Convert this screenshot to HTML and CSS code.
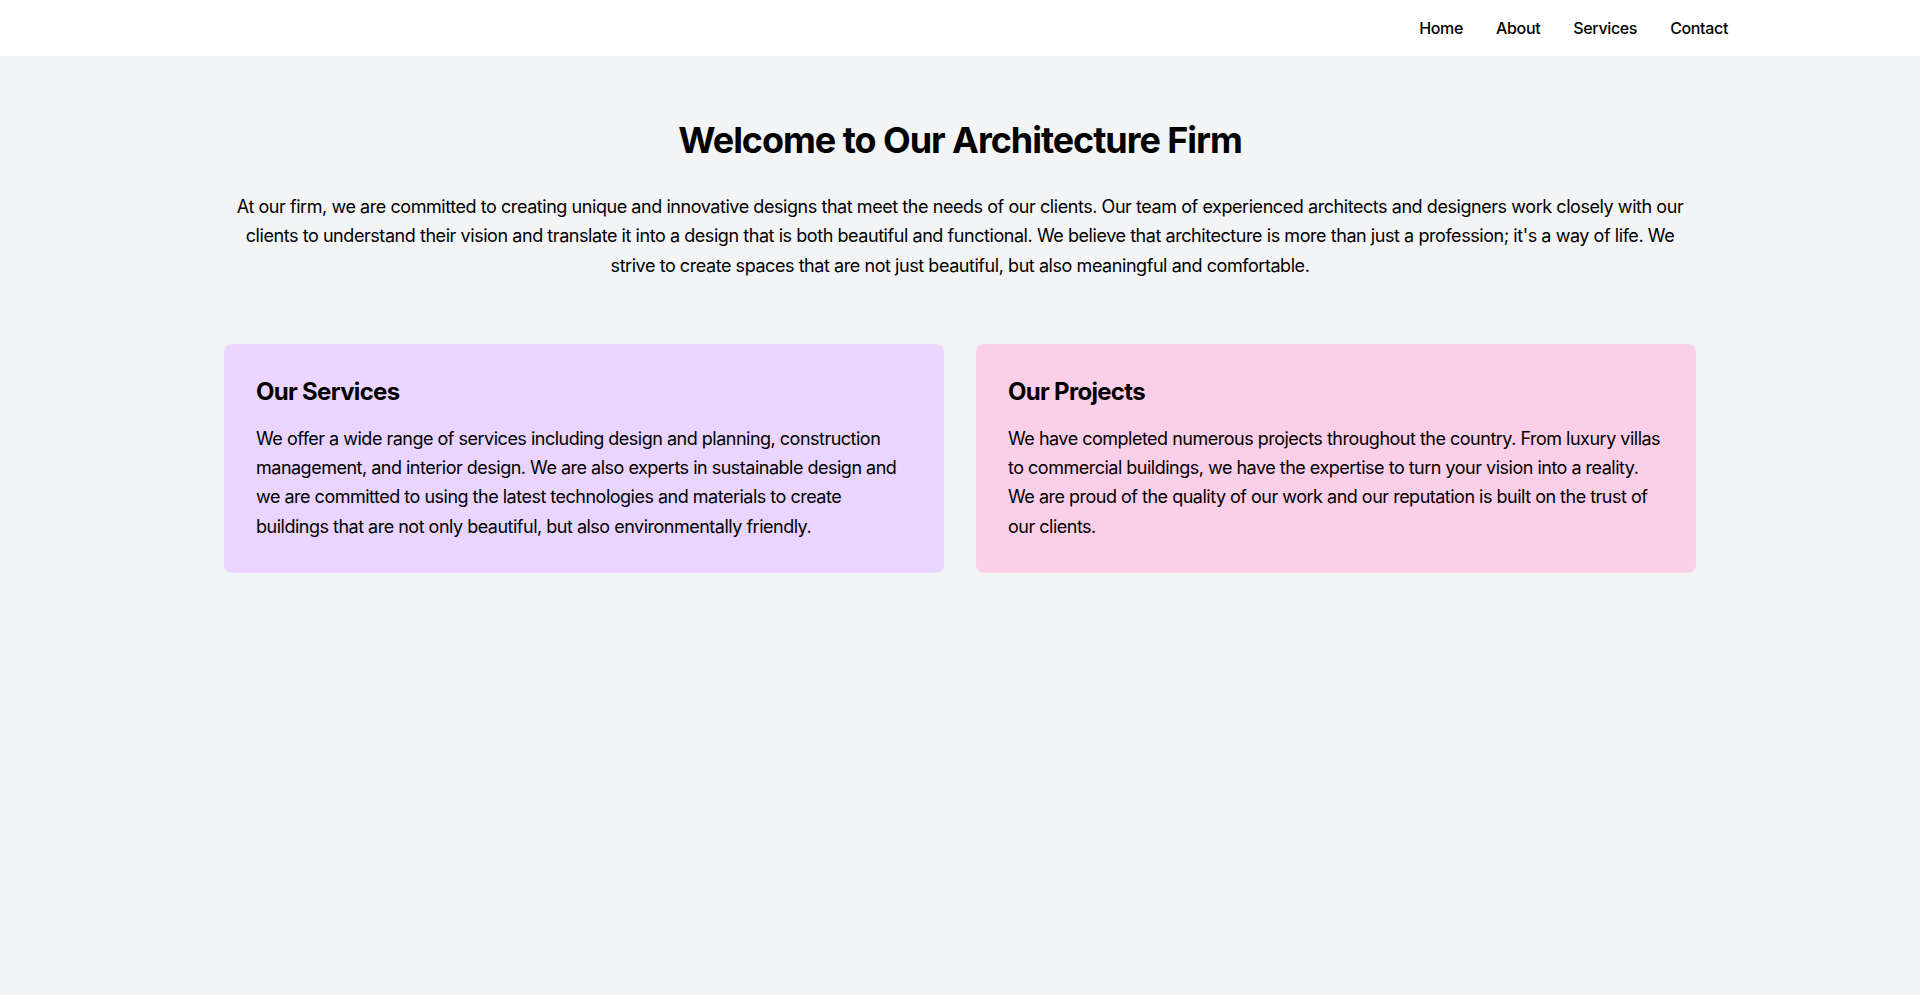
FILE: index.html
```html
<!DOCTYPE html>
<html lang="en">
<head>
<meta charset="utf-8">
<title>Architecture Firm</title>
<link rel="stylesheet" href="styles.css">
</head>
<body>
<header class="topbar">
  <nav class="nav">
    <a href="#" class="nav-link">Home</a>
    <a href="#" class="nav-link">About</a>
    <a href="#" class="nav-link">Services</a>
    <a href="#" class="nav-link">Contact</a>
  </nav>
</header>
<main class="main">
  <h1 class="title">Welcome to Our Architecture Firm</h1>
  <p class="intro">At our firm, we are committed to creating unique and innovative designs that meet the needs of our clients. Our team of experienced architects and designers work closely with our clients to understand their vision and translate it into a design that is both beautiful and functional. We believe that architecture is more than just a profession; it's a way of life. We strive to create spaces that are not just beautiful, but also meaningful and comfortable.</p>
  <div class="cards">
    <section class="card card-purple">
      <h2 class="card-title">Our Services</h2>
      <p class="card-text">We offer a wide range of services including design and planning, construction management, and interior design. We are also experts in sustainable design and we are committed to using the latest technologies and materials to create buildings that are not only beautiful, but also environmentally friendly.</p>
    </section>
    <section class="card card-pink">
      <h2 class="card-title">Our Projects</h2>
      <p class="card-text">We have completed numerous projects throughout the country. From luxury villas to commercial buildings, we have the expertise to turn your vision into a reality. We are proud of the quality of our work and our reputation is built on the trust of our clients.</p>
    </section>
  </div>
</main>
</body>
</html>
```

FILE: styles.css
```css
* { box-sizing: border-box; }
html, body { margin: 0; padding: 0; }
body {
  background: #f3f4f6;
  color: #000;
  font-family: Inter, "Noto Sans", "Liberation Sans", sans-serif;
  min-height: 995px;
}
.topbar {
  background: #ffffff;
  height: 56px;
}
.nav {
  max-width: 1536px;
  margin: 0 auto;
  height: 56px;
  display: flex;
  justify-content: flex-end;
  align-items: center;
  gap: 33px;
}
.nav-link {
  color: #000;
  text-decoration: none;
  font-size: 16px;
  font-weight: 500;
  line-height: 24px;
  letter-spacing: -0.35px;
}
.main {
  max-width: 1536px;
  margin: 0 auto;
  padding: 64px 32px;
}
.title {
  margin: 0 0 32px;
  text-align: center;
  font-size: 36px;
  line-height: 40px;
  font-weight: 700;
  letter-spacing: -1.05px;
}
.intro {
  margin: 0 0 64px;
  text-align: center;
  font-size: 18px;
  line-height: 29.25px;
  letter-spacing: -0.44px;
}
.cards {
  display: grid;
  grid-template-columns: 1fr 1fr;
  gap: 32px;
}
.card {
  border-radius: 8px;
  padding: 32px;
}
.card-purple { background: #e9d5ff; }
.card-pink { background: #fbcfe8; }
.card-title {
  margin: 0 0 16px;
  font-size: 24px;
  line-height: 32px;
  font-weight: 700;
  letter-spacing: -0.7px;
}
.card-text {
  margin: 0;
  font-size: 18px;
  line-height: 29.25px;
  letter-spacing: -0.5px;
}
```
